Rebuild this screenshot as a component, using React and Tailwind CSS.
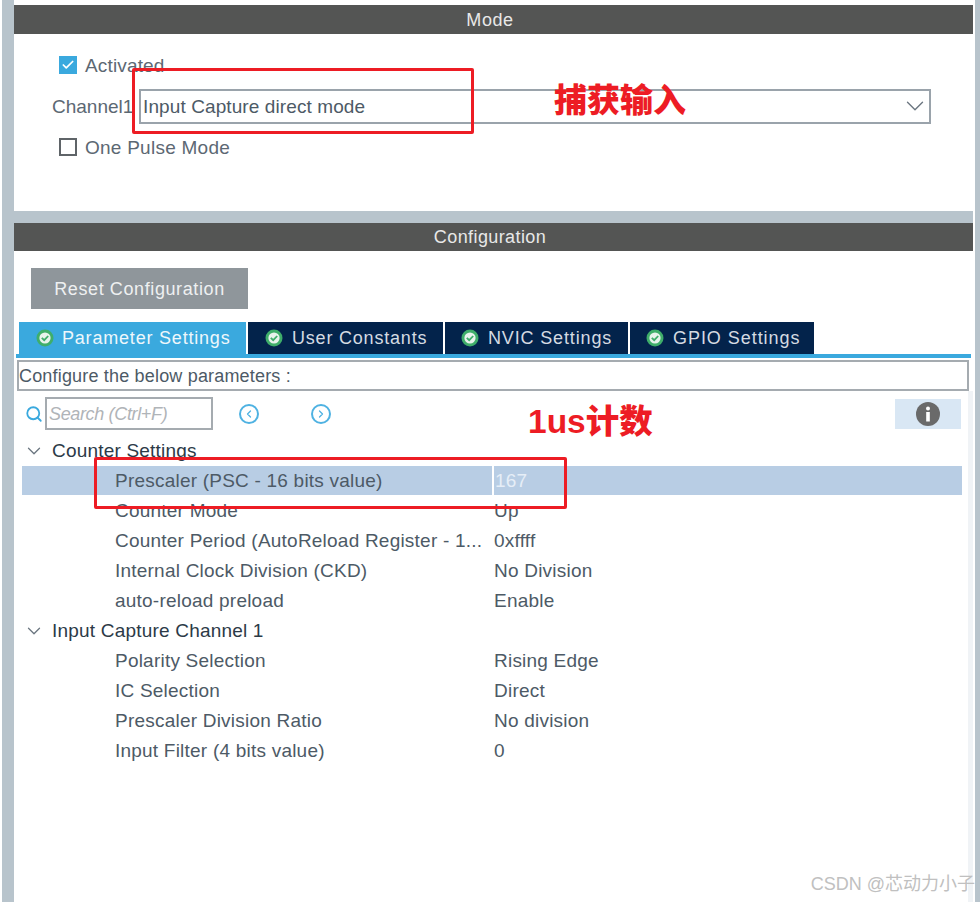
import React from "react";
import { ChevronDown, Search, Check, ChevronLeft, ChevronRight } from "lucide-react";

const font = "font-['Liberation_Sans','Noto_Sans_CJK_SC',sans-serif]";

const CheckBadge = () => (
  <svg width="18" height="18" viewBox="0 0 18 18" className="shrink-0">
    <circle cx="9" cy="9" r="8.5" fill="#3fae6a" />
    <circle cx="9" cy="9" r="5.6" fill="#e8f3ec" />
    <path d="M5.8 8.8 L8.2 11.2 L12.2 7" fill="none" stroke="#3fae6a" strokeWidth="1.8" />
  </svg>
);

const tabs = [
  { label: "Parameter Settings", box: "w-[229px] pl-[17px] gap-[8px] tracking-[0.8px]", active: true },
  { label: "User Constants", box: "w-[197px] pl-[17px] gap-[9px] tracking-[0.8px]" },
  { label: "NVIC Settings", box: "w-[185px] pl-[16px] gap-[9px] tracking-[0.85px]" },
  { label: "GPIO Settings", box: "w-[186px] pl-[16px] gap-[9px] tracking-[0.95px]" },
];

const Row = ({ label, value }) => (
  <div className="flex h-[30px] items-center pt-[2px] text-[19px] tracking-[0.22px] text-[#4d5a66]">
    <span className="w-[472px] shrink-0 pl-[93px] whitespace-nowrap">{label}</span>
    <span className="whitespace-nowrap">{value}</span>
  </div>
);

const Group = ({ label }) => (
  <div className="flex h-[30px] items-center pt-[2px] text-[19px] tracking-[0.2px] text-[#2c3a47]">
    <ChevronDown size={22} strokeWidth={1.4} className="ml-[1px] text-[#6b7680]" />
    <span className="ml-[7px] whitespace-nowrap">{label}</span>
  </div>
);

export default function App() {
  return (
    <div className={`${font} relative flex h-[902px] w-[980px] overflow-hidden bg-white`}>
      {/* left gutter */}
      <div className="ml-[2px] w-[12px] shrink-0 bg-[#b8c4cc]" />

      <div className="flex w-[959px] shrink-0 flex-col pt-[5px]">
        <div className="flex h-[29px] items-center justify-center bg-[#545554] pr-[7px] pt-[1px] text-[18px] tracking-[0.6px] text-[#e8e8e8]">
          Mode
        </div>

        {/* Mode panel */}
        <div className="flex h-[177px] flex-col bg-white pl-[38px] text-[19px] text-[#5c6873]">
          <div className="mt-[13px] flex h-[36px] items-center gap-[8px] pl-[7px] tracking-[0.15px]">
            <span className="flex h-[18px] w-[18px] items-center justify-center bg-[#3aa9de]">
              <Check size={14} strokeWidth={3} className="text-white" />
            </span>
            <span className="pt-[2px]">Activated</span>
          </div>
          <div className="mt-[5px] flex h-[36px] items-center">
            <span className="w-[87px] shrink-0 pt-[2px] whitespace-nowrap">Channel1</span>
            <div className="flex h-[35px] w-[792px] items-center justify-between border-2 border-[#9aa3ab] pl-[2px] text-[#4d5a66] tracking-[0.1px]">
              <span className="pt-[2px]">Input Capture direct mode</span>
              <ChevronDown size={30} strokeWidth={1.1} className="-mr-[1px] text-[#6b7680]" />
            </div>
          </div>
          <div className="mt-[5px] flex h-[36px] items-center gap-[8px] pl-[7px] tracking-[0.25px]">
            <span className="h-[18px] w-[18px] border-2 border-[#5f6468] bg-white" />
            <span className="pt-[2px]">One Pulse Mode</span>
          </div>
        </div>

        <div className="h-[12px] bg-[#b8c4cc]" />

        <div className="flex h-[28px] items-center justify-center bg-[#545554] pr-[7px] pt-[1px] text-[18px] tracking-[0.4px] text-[#e8e8e8]">
          Configuration
        </div>

        {/* Configuration panel */}
        <div className="flex flex-1 flex-col">
          <div className="mt-[17px] ml-[17px] flex h-[41px] w-[217px] items-center justify-center bg-[#8f969b] pt-[1px] text-[18px] tracking-[0.6px] text-[#eef0f1]">
            Reset Configuration
          </div>

          <div className="mt-[13px] ml-[5px] flex h-[32px] text-[18px]">
            {tabs.map((tab) => (
              <div
                key={tab.label}
                className={`flex items-center border-r-2 border-white ${tab.box} ${
                  tab.active ? "bg-[#3aa9de] text-[#eef7fb]" : "bg-[#03234b] text-[#d5dbe2]"
                }`}
              >
                <CheckBadge />
                <span className="whitespace-nowrap">{tab.label}</span>
              </div>
            ))}
          </div>
          <div className="ml-[2px] mr-[2px] h-[4px] bg-[#3aa9de]" />

          <div className="mt-[2px] ml-[3px] mr-[4px] flex h-[31px] items-center border-2 border-[#a5abb0] pt-[1px] text-[18px] tracking-[0.18px] text-[#4d5a66]">
            Configure the below parameters :
          </div>

          {/* scrollable list, with a pale scroll track on its right */}
          <div className="flex flex-1 flex-col border-r-[5px] border-[#f0f3f6] pt-[6px]">
            <div className="flex h-[33px] items-center">
              <Search size={18} strokeWidth={2.4} className="ml-[11px] text-[#3aa9de]" />
              <div className="ml-[2px] flex h-[33px] w-[168px] items-center border-2 border-[#a5abb0] pl-[2px] pt-[2px] text-[18px] italic tracking-[-0.35px] text-[#b0b4b8]">
                Search (Ctrl+F)
              </div>
              <span className="ml-[26px] flex h-[20px] w-[20px] items-center justify-center rounded-full border-2 border-[#4fb2e2]">
                <ChevronLeft size={12} strokeWidth={2.5} className="text-[#4fb2e2]" />
              </span>
              <span className="ml-[52px] flex h-[20px] w-[20px] items-center justify-center rounded-full border-2 border-[#4fb2e2]">
                <ChevronRight size={12} strokeWidth={2.5} className="text-[#4fb2e2]" />
              </span>
              <div className="ml-auto mr-[7px] flex h-[30px] w-[66px] items-center justify-center bg-[#d9e7f4]">
                <svg width="24" height="24" viewBox="0 0 24 24">
                  <circle cx="12" cy="12" r="12" fill="#6a6a6a" />
                  <circle cx="12" cy="6.5" r="2" fill="#ffffff" />
                  <rect x="10.2" y="10" width="3.6" height="9.5" fill="#ffffff" />
                </svg>
              </div>
            </div>

            <div className="mt-[5px] ml-[8px] mr-[6px] flex flex-col">
              <Group label="Counter Settings" />
              <div className="mt-[1px] flex h-[29px] items-stretch bg-[#b8cde4] text-[19px] tracking-[0.22px] text-[#4d5a66]">
                <span className="flex w-[470px] shrink-0 items-center pl-[93px] pt-[1px] whitespace-nowrap">Prescaler (PSC - 16 bits value)</span>
                <span className="flex items-center border-l-2 border-white pl-[1px] pt-[1px] text-[#e6eef7]">167</span>
              </div>
              <Row label="Counter Mode" value="Up" />
              <Row label="Counter Period (AutoReload Register - 1..." value="0xffff" />
              <Row label="Internal Clock Division (CKD)" value="No Division" />
              <Row label="auto-reload preload" value="Enable" />
              <Group label="Input Capture Channel 1" />
              <Row label="Polarity Selection" value="Rising Edge" />
              <Row label="IC Selection" value="Direct" />
              <Row label="Prescaler Division Ratio" value="No division" />
              <Row label="Input Filter (4 bits value)" value="0" />
            </div>
          </div>
        </div>
      </div>

      {/* right gutter */}
      <div className="ml-[2px] w-[5px] shrink-0 bg-[#b8c4cc]" />

      {/* red annotations drawn over the screenshot */}
      <div className="absolute left-[132px] top-[68px] h-[66px] w-[342px] rounded-[2px] border-[3px] border-[#ed1c24]" />
      <span className="absolute left-[554px] top-[80px] text-[33px] font-black leading-[42px] text-[#ed1c24]">捕获输入</span>
      <div className="absolute left-[94px] top-[457px] h-[52px] w-[473px] rounded-[2px] border-[3px] border-[#ed1c24]" />
      <span className="absolute left-[528px] top-[401px] text-[33.5px] font-black leading-[42px] text-[#ed1c24]">1us计数</span>

      <span className="absolute right-[5px] top-[872px] text-[18px] leading-[24px] text-[#c0c0c0]">CSDN @芯动力小子</span>
    </div>
  );
}
